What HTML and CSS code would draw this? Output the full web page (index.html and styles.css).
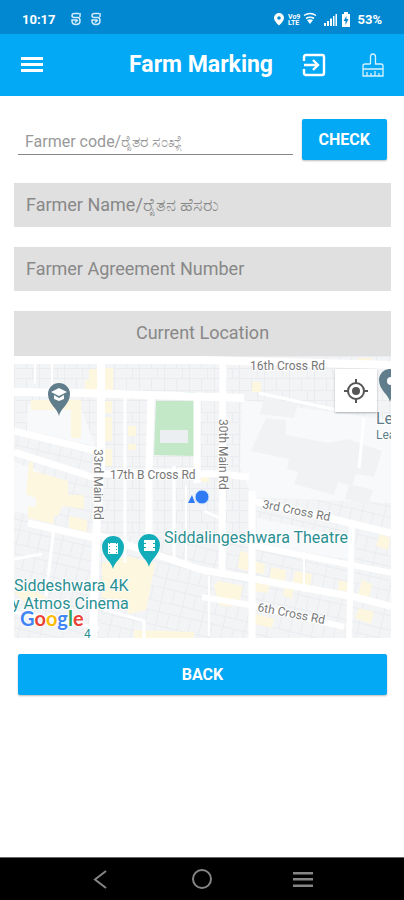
FILE: index.html
```
<!DOCTYPE html>
<html lang="en">
<head>
    <meta charset="UTF-8">
    <meta name="viewport" content="width=device-width, initial-scale=1">
    <title>Farm Marking</title>
    <link rel="stylesheet" href="styles.css">
</head>
<body>
    <div class="statusbar">
        <span class="time">10:17</span>
        <svg class="notify" width="32" height="14" viewBox="0 0 32 14" fill="none" stroke="#d5ecfa" stroke-width="1.5">
            <path id="note" d="M9 1.500H4.500Q2 1.500 2 3.500Q2 5.500 4 5.500H8Q10 5.500 10 9Q10 12.500 6 12.500Q2 12.500 2 9V8H7M10 1V5M5 10.500L8 8"/>
            <use href="#note" x="20"/>
        </svg>
        <svg class="signals" width="78" height="18" viewBox="0 0 78 18" fill="#fff">
            <path fill-rule="evenodd" d="M6 3a5 5 0 0 0-5 5c0 3 5 7.500 5 7.500S11 11 11 8a5 5 0 0 0-5-5zm0 3.200a1.800 1.800 0 1 1 0 3.600 1.800 1.800 0 0 1 0-3.600z"/>
            <text class="volte" x="15" y="9">Vo9</text>
            <text class="volte" x="15" y="15">LTE</text>
            <path fill="none" stroke="#fff" stroke-width="1.500" d="M31 5.500q6-4 12 0M33 8.500q4-2.500 8 0"/>
            <path d="M34 10q3-1.500 6 0l-3 4z"/>
            <path d="M51 13h2v3h-2zM54 11h2v5h-2zM57 8.500h2v7.500h-2zM60 6h1.500v10H60zM62.500 4h1.500v12h-1.500z"/>
            <path d="M69 4h2V2h4v2h2v13h-8z"/>
            <path d="M73.500 6l-3 5h2v4l3-6h-2z" fill="#0288d1"/>
        </svg>
        <span class="battery">53%</span>
    </div>

    <header class="appbar">
        <button class="icon-btn" aria-label="Menu">
            <svg width="22" height="18" viewBox="0 0 22 18" fill="#fff"><path d="M0 1h22v3H0zM0 7h22v3H0zM0 13h22v3H0z"/></svg>
        </button>
        <h1>Farm Marking</h1>
        <button class="icon-btn" aria-label="Exit">
            <svg width="24" height="24" viewBox="0 0 24 24" fill="none" stroke="#fff" stroke-width="2.400">
                <path d="M2 8V4q0-2 2-2h16q2 0 2 2v16q0 2-2 2H4q-2 0-2-2v-4M2 12h13M11 7l5 5-5 5"/>
            </svg>
        </button>
        <button class="icon-btn brush" aria-label="Clear">
            <svg width="22" height="24" viewBox="0 0 22 24" fill="none" stroke="#d8f1ff" stroke-width="1.300">
                <path d="M8.500 11V4q0-3 2.500-3t2.500 3v7H19q2 0 2 2v3H1v-3q0-2 2-2h5.500M1 16v7h20v-7M5 19v4M9 20v3M13 18v5M17 20v3"/>
            </svg>
        </button>
    </header>

    <main>
        <form class="search">
            <input type="text" class="code" aria-label="Farmer code" placeholder="Farmer code/ರೈತರ ಸಂಖ್ಯೆ">
            <button type="button" class="btn">CHECK</button>
        </form>
        <input type="text" class="field" aria-label="Farmer name" placeholder="Farmer Name/ರೈತನ ಹೆಸರು" readonly>
        <input type="text" class="field" aria-label="Farmer agreement number" placeholder="Farmer Agreement Number" readonly>
        <input type="text" class="field location" aria-label="Current location" placeholder="Current Location" readonly>

        <div class="map">
            <svg class="map-canvas" viewBox="0 0 377 282" preserveAspectRatio="xMidYMid slice">
                <defs>
                    <pattern id="plots" width="25" height="22" patternUnits="userSpaceOnUse">
                        <path fill="#f3f4f6" d="M0 0h25v22H0z"/>
                        <path fill="none" stroke="#eaecef" d="M0 .500h25M.500 0v22M12.500 0v12M0 12.500h25M18.500 12v10"/>
                    </pattern>
                    <pattern id="slant" width="22" height="24" patternUnits="userSpaceOnUse" patternTransform="rotate(13)">
                        <path fill="#f3f4f6" d="M0 0h22v24H0z"/>
                        <path fill="none" stroke="#eaecef" d="M0 .500h22M.500 0v24M11.500 0v14M0 14.500h22"/>
                    </pattern>
                    <path id="pin" d="M0 22C-1 15-11 10-11 0a11 11 0 0 1 22 0C11 10 1 15 0 22z"/>
                </defs>

                <!-- blocks -->
                <path fill="url(#plots)" d="M0 0h377v282H0z"/>
                <path fill="url(#slant)" d="M0 76l83 18v188H0zM92 180l285 0v102H85zM238 130h139v152H238z"/>
                <path fill="#f8f9fb" d="M228 44l149 20v83l-139-6-12-30zM14 48l53 4 14 38-68-16zM0 106l25 8v47L0 155zM243 162l94 20v22l-94-16z"/>
                <path fill="#f1f2f4" d="M252 62l20 2v15l42 8 20-4 34 12-8 26-18-3-4 12-65-17 2-10-38-8zM250 42l34 6-4 14-34-4zM287 108l40 11-7 20-40-11zM335 128l24 6-5 15-23-6z"/>
                <g fill="#fdf7e0">
                    <path d="M17 44h50v38H57V54H17zM75 13h8v22H71V24h4zM91 12h8v22h-8zM91 45h7v12h-7zM91 61h7v24h-7zM91 93h7v17h-7zM114 70h8v10h-8zM114 88h8v6h-8z"/>
                    <path d="M15 106h4v9l35 10v14h16v14l-22-3-4 10-22-6v-12l-10-4zM14 150l26 4v14l-26-6zM55 160l18 4v12l-18-4zM0 236l18-4 14 10-20 5zM88 207l26-7 27 8-9 46-18 4v-14l-26-2z"/>
                    <path d="M240 205l11 3-1 10-11-2zM257 211l15 3-1 12-15-4zM281 215l17 3-2 13-17-4zM205 225l24 5-3 14-8-1-1 8-12-2-5-20zM242 226l14 3-3 8-13-2zM271 230l9 2-2 11-9-3zM325 224l12 3-1 9-12-2zM366 178l10 4-2 12-12-4zM348 224l10 4-4 18-10-6zM345 252l15 4-3 12-16-6zM242 258l18 5-2 9-18-4zM238 26h9v10h-9zM187 118h8v8h-8zM226 195l8 2v18l-10-3zM120 274l60 2v6h-60zM247 2h14v4h-14zM344 2h14v4h-14z"/>
                </g>
                <path fill="#c3e8c8" d="M139 36h42v3h-42zM142 45h39v55l-41-1z"/>
                <path fill="#eceff1" d="M146 74h28v13h-28z"/>

                <!-- roads -->
                <g fill="none" stroke="#fff" stroke-width="7">
                    <path d="M-2 4h190l192 5M0 36l70 1 160 5M87 0v110l-5 70-3 102" stroke-width="8"/>
                    <path d="M137 40l-2 75v68M183 42v85M209 4l-1 214M238 135v147"/>
                    <path d="M85 118h120l30 3M0 75l83 20M0 96l85 27M14 167l67 15M238 145l77 17 62 15M81 178l107 36 47 8 106 19 38 10"/>
                    <path d="M241 190l137 27M188 241l47 8 95 22M338 166l-3 116" stroke-width="6"/>
                    <path d="M111 42v165M245 37l78 17M0 203l28-5M40 170l-8 70M160 110v95M190 155l18 8M0 256l85 16M80 250l50 15v20M350 62l-5 50" stroke-width="3"/>
                    <path d="M21 8v20M38 8v25M137 115l50-3M172 130v75M195 220v60M290 196v40" stroke-width="2"/>
                </g>

                <!-- road names -->
                <g class="road">
                    <text x="236" y="14">16th Cross Rd</text>
                    <text x="96" y="123">17th B Cross Rd</text>
                    <text transform="translate(80 93) rotate(90)">33rd Main Rd</text>
                    <text transform="translate(205 63) rotate(90)">30th Main Rd</text>
                    <text transform="translate(248 152) rotate(11)">3rd Cross Rd</text>
                    <text transform="translate(243 255) rotate(11)">6th Cross Rd</text>
                </g>

                <!-- places -->
                <g fill="#607d8b">
                    <use href="#pin" x="45" y="38"/>
                    <use href="#pin" x="376" y="24"/>
                </g>
                <path fill="#fff" d="M45 32l8 4-8 4-8-4zM40 39l5 3 5-3v4l-5 2-5-2z"/>
                <circle cx="377" cy="25" r="4" fill="#fff"/>
                <g fill="#12adb9">
                    <use href="#pin" x="99" y="191"/>
                    <use href="#pin" x="135" y="189"/>
                </g>
                <path fill="#fff" d="M94 187h10v11H94zM130 184h11v11h-11z"/>
                <path fill="none" stroke="#12adb9" stroke-dasharray="1 2" d="M95.500 187v11M102.500 187v11"/>
                <path fill="none" stroke="#12adb9" d="M130 187.500h2M139 187.500h2M130 191.500h2M139 191.500h2"/>
                <g class="place">
                    <text x="150" y="187">Siddalingeshwara Theatre</text>
                    <text x="0" y="235">Siddeshwara 4K</text>
                    <text x="-2" y="253">y Atmos Cinema</text>
                    <text class="small" x="70" y="282">4</text>
                </g>
                <g class="place school">
                    <text x="362" y="68">Le</text>
                    <text class="small" x="362" y="83">Lea</text>
                </g>

                <path fill="#2f7bf5" d="M174 147l4-8 3 8z"/>
                <circle cx="188" cy="141" r="7" fill="#2f7bf5" stroke="#dbe8fd"/>
                <text class="google" x="6" y="270"><tspan fill="#4285f4">G</tspan><tspan fill="#ea4335">o</tspan><tspan fill="#fbbc05">o</tspan><tspan fill="#4285f4">g</tspan><tspan fill="#34a853">l</tspan><tspan fill="#ea4335">e</tspan></text>
            </svg>
            <button class="locate" aria-label="My location">
                <svg width="24" height="24" viewBox="0 0 24 24" fill="none" stroke="#555" stroke-width="2">
                    <circle cx="12" cy="12" r="8"/>
                    <circle cx="12" cy="12" r="4" fill="#555" stroke="none"/>
                    <path d="M12 0v4M12 20v4M0 12h4M20 12h4"/>
                </svg>
            </button>
        </div>

        <button class="btn back">BACK</button>
    </main>

    <nav class="navbar">
        <button class="icon-btn" aria-label="Back">
            <svg width="20" height="20" viewBox="0 0 20 20" fill="none" stroke="#858585" stroke-width="2"><path d="M15 2L4 10.500 15 19"/></svg>
        </button>
        <button class="icon-btn" aria-label="Home">
            <svg width="20" height="20" viewBox="0 0 20 20" fill="none" stroke="#858585" stroke-width="2"><circle cx="10" cy="10" r="9"/></svg>
        </button>
        <button class="icon-btn" aria-label="Recent apps">
            <svg width="20" height="20" viewBox="0 0 20 20" fill="#858585"><path d="M0 3h20v2.500H0zM0 9h20v2.500H0zM0 15.500h20V18H0z"/></svg>
        </button>
    </nav>
</body>
</html>
```
FILE: styles.css
```
* { box-sizing: border-box; }
body { display: flex; flex-direction: column; min-height: 100vh; margin: 0; background: #fff; font-family: Roboto, "Noto Sans", sans-serif; }
button, input { font-family: inherit; border: none; border-radius: 0; margin: 0; }
button { cursor: pointer; }
svg { display: block; }

.statusbar { display: flex; align-items: center; height: 34px; padding: 4px 22px 0; background: #0288d1; color: #fff; font-size: 13px; font-weight: bold; }
.notify { margin-left: 14px; }
.signals { margin-left: auto; margin-right: 6px; }
.volte { font-size: 7px; font-weight: bold; }

.appbar { display: flex; align-items: center; height: 62px; padding: 0 20px 0 21px; background: #03a9f4; color: #fff; }
.appbar h1 { margin: 0 29px 0 auto; font-size: 23px; line-height: 28px; font-weight: bold; }
.icon-btn { padding: 0; background: none; }
.brush { margin-left: 36px; }

main { flex: 1; padding: 23px 13px 16px 14px; }
.search { display: flex; align-items: flex-start; gap: 9px; padding: 0 4px; margin-bottom: 23px; }
.code { flex: 1; min-width: 0; height: 36px; padding: 10px 7px 0; background: none; border-bottom: 1px solid #888; font-size: 16px; }
.code::placeholder { color: #999; opacity: 1; }
.btn { height: 41px; padding: 0 17px; border-radius: 2px; background: #03a9f4; color: #fff; font-size: 16px; font-weight: bold; box-shadow: 0 1px 2px #0004; }
.field { display: block; width: 100%; height: 44px; margin-bottom: 20px; padding: 0 12px 2px; background: #e0e0e0; font-size: 18px; }
.field::placeholder { color: #888; opacity: 1; }
.location { height: 45px; margin-bottom: 0; text-align: center; }

.map { position: relative; height: 282px; overflow: hidden; }
.map-canvas { width: 100%; height: 100%; }
.road { font-size: 12px; fill: #777; stroke: #fff; stroke-width: 2px; paint-order: stroke; }
.place { font-size: 16px; fill: #2a8f92; stroke: #fff; stroke-width: 2px; paint-order: stroke; }
.school { fill: #607d8b; }
.small { font-size: 12px; }
.google { font-family: Lato, sans-serif; font-size: 20px; font-weight: bold; stroke: #fff; stroke-width: 2px; paint-order: stroke; }
.locate { position: absolute; top: 13px; right: 14px; display: grid; place-items: center; width: 42px; height: 43px; padding: 0; background: #fffe; box-shadow: 0 1px 2px #0004; }
.back { display: block; width: calc(100% - 8px); margin: 16px 4px 0; }

.navbar { display: flex; justify-content: center; align-items: center; gap: 81px; height: 43px; background: #000; border-top: 1px solid #666; }
```
